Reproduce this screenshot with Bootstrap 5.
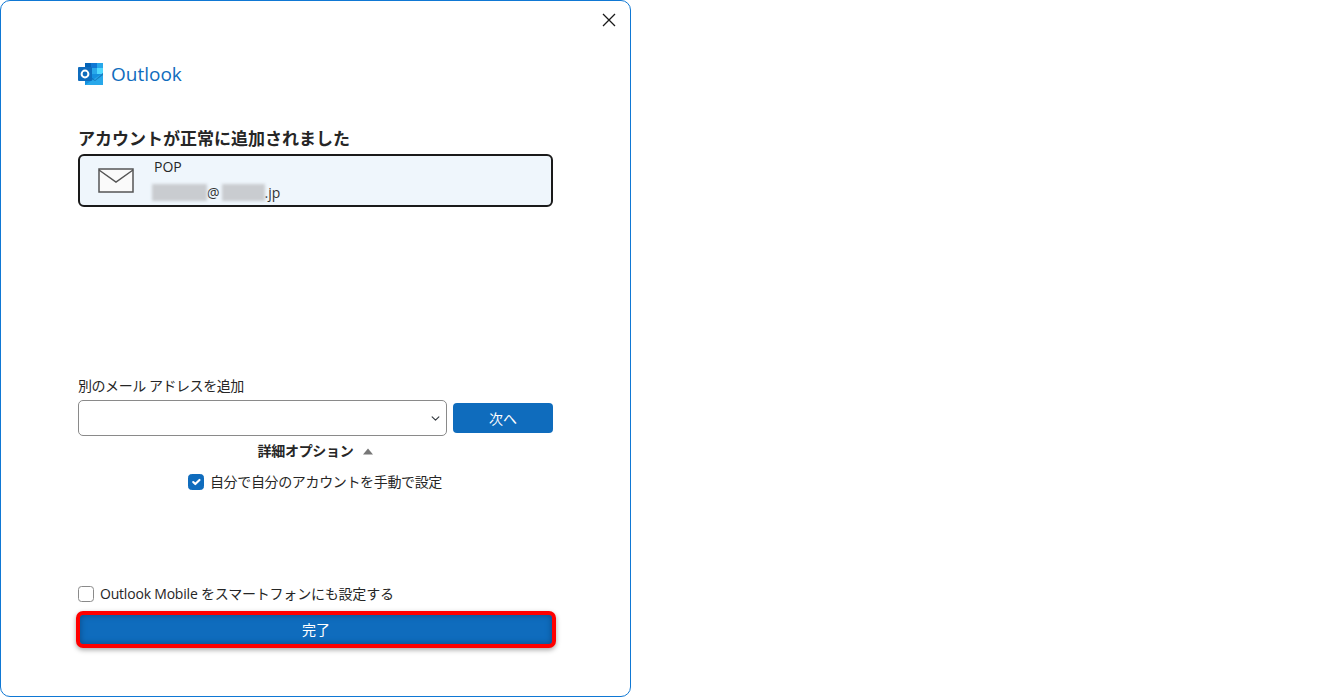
<!DOCTYPE html>
<html lang="ja">
<head>
    <meta charset="UTF-8">
    <meta name="viewport" content="width=device-width, initial-scale=1.0">
    <title>Outlook</title>
    <link href="https://cdn.jsdelivr.net/npm/bootstrap@5.3.3/dist/css/bootstrap.min.css" rel="stylesheet">
    <style>
        html, body {
            height: 100%;
            margin: 0;
            overflow: hidden;
        }
        body {
            background: white;
            color: #262626;
            font-family: "Open Sans", "Noto Sans CJK JP", sans-serif;
            font-size: 14px;
        }
        .dlg-frame {
            position: relative;
            width: 631px;
            height: 697px;
            background: white;
            border: 1px solid #0f78d4;
            border-radius: 10px;
            padding: 0 77px;
        }
        .dlg-close {
            position: absolute;
            top: 12px;
            right: 14px;
            line-height: 0;
        }
        .brand-row {
            padding-top: 61px;
            height: 128px;
            gap: 7px;
        }
        .brand-name {
            color: #0f6cbd;
            font-size: 19px;
            line-height: 25px;
        }
        .done-title {
            font-size: 17px;
            font-weight: 700;
            line-height: 20px;
            margin: 0 0 5px;
        }
        .acct-box {
            height: 53px;
            background: #eff6fc;
            border: 2px solid #1a1a1a;
            border-radius: 6px;
            padding-left: 18px;
            gap: 20px;
        }
        .acct-lines {
            line-height: 20px;
            margin-top: -1px;
        }
        .acct-lines div + div {
            margin-top: 6px;
        }
        .acct-mail {
            margin-left: -2px;
            color: #333;
        }
        .masked {
            display: inline-block;
            height: 17px;
            vertical-align: -3px;
            background: #c9ccd0;
            filter: blur(1.5px);
        }
        .mask-a { width: 55px; }
        .mask-b { width: 43px; margin-left: 2px; }
        .add-label {
            margin-top: 169px;
            line-height: 20px;
            font-size: 14px;
            letter-spacing: -0.45px;
            margin-bottom: 4px;
        }
        .add-row {
            gap: 6px;
        }
        .add-select {
            width: 369px;
            height: 36px;
            border: 1px solid #8a8a8a;
            border-radius: 5px;
            background-size: 11px 9px;
            background-position: right 5px center;
        }
        .next-btn {
            width: 100px;
            height: 30px;
            padding: 0;
            font-size: 14px;
            background: #0f6cbd;
            border: 0;
            border-radius: 4px;
            color: white;
        }
        .more-opts {
            margin-top: 5px;
            font-weight: 700;
            line-height: 20px;
            letter-spacing: -0.3px;
            gap: 10px;
        }
        .manual-row {
            margin-top: 11px;
            gap: 6px;
            line-height: 20px;
            letter-spacing: -0.35px;
            padding-right: 1px;
        }
        .tick-box {
            width: 16px;
            height: 16px;
            margin: 0;
            border-radius: 3px;
            flex: none;
        }
        .tick-box:checked {
            background-color: #0f6cbd;
            border-color: #0f6cbd;
        }
        .tick-box.plain {
            border: 1px solid #8a8a8a;
        }
        .mobile-row {
            margin-top: 92px;
            gap: 6px;
            line-height: 20px;
            letter-spacing: -0.2px;
        }
        .finish-btn {
            display: block;
            width: 480px;
            height: 37px;
            margin: 7px 0 0 -2px;
            padding: 0;
            font-size: 14px;
            color: white;
            background: #0f6cbd;
            border: 4px solid #f00;
            border-radius: 7px;
            box-shadow: inset 0 0 6px #0b4a85, 0 2px 5px rgba(0, 0, 0, .35);
        }
    </style>
</head>
<body>
    <div class="dlg-frame">
        <div class="dlg-close">
            <svg width="14" height="14" viewBox="0 0 14 14"><path d="M1 1l12 12M13 1L1 13" stroke="#1a1a1a" stroke-width="1.3" fill="none"/></svg>
        </div>

        <div class="brand-row d-flex align-items-start">
            <svg width="26" height="24" viewBox="0 0 26 24">
                <path d="M7 1h18v11H7z" fill="#1490df"/>
                <path d="M7 1h6v5H7z" fill="#0364b8"/>
                <path d="M13 1h6v5h-6z" fill="#0f78d4"/>
                <path d="M19 1h6v5h-6z" fill="#28a8ea"/>
                <path d="M13 6h6v6h-6z" fill="#28a8ea"/>
                <path d="M19 6h6v6h-6z" fill="#50d9ff"/>
                <path d="M7 12l18 0v11H7z" fill="#1490df"/>
                <path d="M7 23l18-12v12z" fill="#28a8ea"/>
                <path d="M7 11l10 7 8-7v2l-8 6-10-6z" fill="#0a5a9e" opacity=".55"/>
                <rect x="0" y="5" width="14" height="14" rx="1" fill="#0f6cbd"/>
                <circle cx="7" cy="12" r="3.4" fill="none" stroke="white" stroke-width="2"/>
            </svg>
            <span class="brand-name">Outlook</span>
        </div>

        <h1 class="done-title">アカウントが正常に追加されました</h1>
        <div class="acct-box d-flex align-items-center">
            <svg width="36" height="25" viewBox="0 0 36 25" class="flex-shrink-0">
                <rect x="1" y="1" width="34" height="23" fill="#fafafa" stroke="#555" stroke-width="1.5"/>
                <path d="M1 2l17 12L35 2" fill="none" stroke="#555" stroke-width="1.5"/>
            </svg>
            <div class="acct-lines">
                <div>POP</div>
                <div class="acct-mail"><span class="masked mask-a"></span>@<span class="masked mask-b"></span>.jp</div>
            </div>
        </div>

        <div class="add-label">別のメール アドレスを追加</div>
        <div class="add-row d-flex align-items-center">
            <select class="form-select add-select" aria-label="別のメール アドレスを追加"></select>
            <button class="btn next-btn" type="button">次へ</button>
        </div>

        <div class="more-opts d-flex justify-content-center align-items-center">
            <span>詳細オプション</span>
            <svg width="10" height="7" viewBox="0 0 10 7"><path d="M5 .5L10 6.5H0z" fill="#777"/></svg>
        </div>

        <div class="manual-row d-flex justify-content-center align-items-center">
            <input class="form-check-input tick-box" type="checkbox" id="manualSetup" checked>
            <label for="manualSetup">自分で自分のアカウントを手動で設定</label>
        </div>

        <div class="mobile-row d-flex align-items-center">
            <input class="form-check-input tick-box plain" type="checkbox" id="mobileSetup">
            <label for="mobileSetup">Outlook Mobile をスマートフォンにも設定する</label>
        </div>
        <button class="btn finish-btn" type="button">完了</button>
    </div>

    <script src="https://cdn.jsdelivr.net/npm/bootstrap@5.3.3/dist/js/bootstrap.bundle.min.js"></script>
</body>
</html>
